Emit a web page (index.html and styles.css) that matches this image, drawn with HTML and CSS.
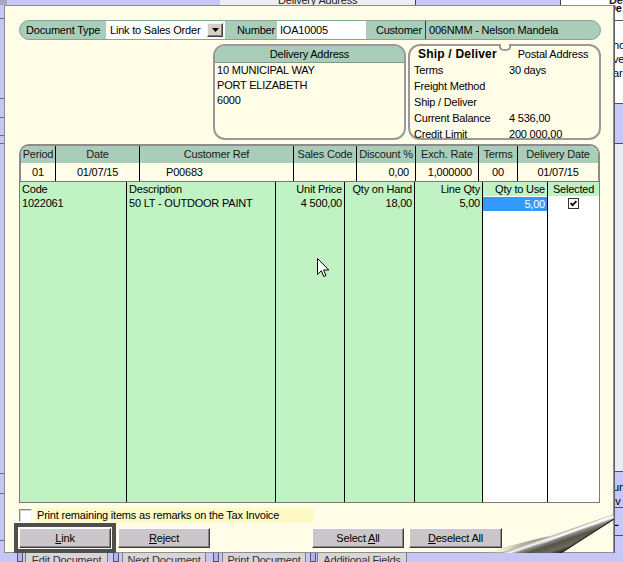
FILE: index.html
```html
<!DOCTYPE html>
<html>
<head>
<meta charset="utf-8">
<link rel="stylesheet" href="styles.css">
</head>
<body>
<div class="top">
  <div class="t-gray"></div>
  <div class="t-lav"></div>
  <div class="t-head"><span>Delivery Address</span></div>
  <div class="t-line"></div>
  <div class="t-lav2"></div>
  <div class="t-line"></div>
  <div class="t-white"><b>De</b></div>
</div>

<div class="left">
  <div class="l1"></div><div class="l2"></div><div class="l3"></div><div class="l4"></div>
  <div class="l5"></div><div class="l6"></div><div class="l7"></div><div class="l8"></div>
</div>

<div class="dialog">
  <div class="pill">
    <span class="lbl doctype">Document Type</span>
    <div class="select"><span>Link to Sales Order</span>
      <span class="ddbtn"><svg width="7" height="4" viewBox="0 0 7 4"><path d="M0 0H7L3.5 4Z" fill="#000"/></svg></span>
    </div>
    <span class="lbl num">Number</span>
    <div class="input">IOA10005</div>
    <span class="lbl cust">Customer</span>
    <span class="sep"></span>
    <span class="val">006NMM - Nelson Mandela</span>
  </div>

  <div class="row2">
    <div class="panel deliv">
      <div class="phead">Delivery Address</div>
      <div class="pbody">10 MUNICIPAL WAY<br>PORT ELIZABETH<br>6000</div>
    </div>
    <div class="panel ship">
      <div class="tabs">
        <div class="tab active">Ship / Deliver</div>
        <div class="tab other">Postal Address</div>
      </div>
      <div class="srows">
        <div class="srow"><span class="k">Terms</span><span>30 days</span></div>
        <div class="srow"><span class="k">Freight Method</span><span></span></div>
        <div class="srow"><span class="k">Ship / Deliver</span><span></span></div>
        <div class="srow"><span class="k">Current Balance</span><span>4 536,00</span></div>
        <div class="srow"><span class="k">Credit Limit</span><span>200 000,00</span></div>
      </div>
    </div>
  </div>

  <div class="hgrid">
    <div class="hc">Period</div>
    <div class="hc">Date</div>
    <div class="hc">Customer Ref</div>
    <div class="hc">Sales Code</div>
    <div class="hc">Discount %</div>
    <div class="hc">Exch. Rate</div>
    <div class="hc">Terms</div>
    <div class="hc last">Delivery Date</div>
    <div class="dc c">01</div>
    <div class="dc c">01/07/15</div>
    <div class="dc p">P00683</div>
    <div class="dc"></div>
    <div class="dc r">0,00</div>
    <div class="dc r">1,000000</div>
    <div class="dc c">00</div>
    <div class="dc c last">01/07/15</div>
  </div>

  <div class="grid">
    <div class="gc g1"><div class="gh">Code</div><div class="gd">1022061</div></div>
    <div class="gc g2"><div class="gh">Description</div><div class="gd">50 LT - OUTDOOR PAINT</div></div>
    <div class="gc g3"><div class="gh r">Unit Price</div><div class="gd r">4 500,00</div></div>
    <div class="gc g4"><div class="gh r">Qty on Hand</div><div class="gd r">18,00</div></div>
    <div class="gc g5"><div class="gh r">Line Qty</div><div class="gd r">5,00</div></div>
    <div class="gc g6 w"><div class="gh r">Qty to Use</div><div class="gd r sel">5,00</div></div>
    <div class="gc g7 w"><div class="gh c">Selected</div><div class="gd c"><svg class="chk" width="11" height="11" viewBox="0 0 11 11"><rect x="0.5" y="0.5" width="10" height="10" fill="#fff" stroke="#333"/><path d="M2.6 5.2 L4.6 7.2 L8.4 3.2" fill="none" stroke="#000" stroke-width="1.8"/></svg></div></div>
  </div>

  <div class="chkrow">
    <span class="cb"></span>
    <span class="cblabel">Print remaining items as remarks on the Tax Invoice</span>
  </div>

  <div class="btns">
    <div class="btn link"><span><u>L</u>ink</span></div>
    <div class="btn reject"><span><u>R</u>eject</span></div>
    <div class="btn selall"><span>Select <u>A</u>ll</span></div>
    <div class="btn desel"><span><u>D</u>eselect All</span></div>
  </div>

  <svg class="curl" width="130" height="75" viewBox="0 0 130 75">
    <defs>
      <linearGradient id="cone" gradientUnits="userSpaceOnUse" x1="80" y1="52" x2="86.5" y2="71">
        <stop offset="0" stop-color="#7d7c6a"/>
        <stop offset="0.1" stop-color="#c4c4bc"/>
        <stop offset="0.2" stop-color="#f8f8f8"/>
        <stop offset="0.3" stop-color="#8e8e88"/>
        <stop offset="0.5" stop-color="#55544a"/>
        <stop offset="0.8" stop-color="#6a6a5e"/>
        <stop offset="1" stop-color="#2c2c2a"/>
      </linearGradient>
      <linearGradient id="shade" x1="0" y1="0" x2="1" y2="0">
        <stop offset="0" stop-color="#fffde8" stop-opacity="0"/>
        <stop offset="0.5" stop-color="#a9a78e" stop-opacity="0.7"/>
        <stop offset="1" stop-color="#6f6e5c" stop-opacity="0.95"/>
      </linearGradient>
      <linearGradient id="streak" x1="0" y1="0" x2="1" y2="0">
        <stop offset="0" stop-color="#ffffff" stop-opacity="0"/>
        <stop offset="0.4" stop-color="#ffffff" stop-opacity="0.9"/>
        <stop offset="1" stop-color="#ffffff" stop-opacity="1"/>
      </linearGradient>
    </defs>
    <path d="M0 75 L24 75 Q48 66 66 58 Q30 66 0 75 Z" fill="url(#shade)"/>
    <path d="M16 75 Q70 57 129 36.5 L130 41 Q100 60 77 75 Z" fill="url(#cone)"/>
    <path d="M50 68.5 Q90 52 128.5 38" fill="none" stroke="url(#streak)" stroke-width="1.6"/>
    <path d="M77 75 Q100 60 130 41" fill="none" stroke="#262626" stroke-width="1.2"/>
  </svg>

  <svg class="cursor" width="13" height="20" viewBox="0 0 13 20"><path d="M0.5 0.5 V16.5 L4.3 12.8 L6.8 18.5 L9 17.6 L6.6 12 H11.8 Z" fill="#fff" stroke="#000" stroke-width="1" stroke-linejoin="miter"/></svg>
</div>

<div class="right">
  <div class="r1"><b>De</b></div>
  <div class="r2"><span>ho</span><span>ve</span><span>ar</span></div>
  <div class="r3"></div>
  <div class="r4"></div>
  <div class="r5"><span>un</span><span>iv</span></div>
  <div class="r6"><b>L</b></div>
  <div class="r7"></div>
</div>

<div class="bottom">
  <span class="mk"></span>
  <span class="tb tb1">Edit Document</span>
  <span class="mk mk2"></span>
  <span class="tb tb2">Next Document</span>
  <span class="mk mk3"></span>
  <span class="tb tb3">Print Document</span>
  <span class="mk mk4"></span>
  <span class="tb tb4">Additional Fields</span>
</div>
</body>
</html>
```

FILE: styles.css
```css
* { box-sizing: border-box; margin: 0; padding: 0; }
html { width: 623px; height: 562px; overflow: hidden; }
body {
  width: 623px; height: 562px; overflow: hidden;
  display: grid;
  grid-template-columns: 4px 610px 9px;
  grid-template-rows: 5px 548px 9px;
  background: #c6c6f4;
  font-family: "Liberation Sans", Arial, sans-serif;
  font-size: 11px;
  letter-spacing: -0.2px;
  line-height: 1;
  color: #000;
}

/* ---------- background window strips ---------- */
.top { grid-column: 1 / 4; grid-row: 1; display: flex; overflow: hidden; }
.t-gray { width: 7px; background: #a8a8bc; }
.t-lav { width: 213px; background: #c8c8f8; }
.t-head { width: 195px; background: #ededf2; display: flex; align-items: flex-end; padding-left: 58px; }
.t-head span, .t-white b { line-height: 12px; margin-bottom: -1px; color: #222; }
.t-line { width: 1px; background: #404040; }
.t-lav2 { width: 144px; background: #c8c8f8; }
.t-white { flex: 1; background: #fff; display: flex; align-items: flex-end; padding-left: 48px; }

.left { grid-column: 1; grid-row: 2; display: flex; flex-direction: column; background: #c6c6f4; }
.left div { flex: none; border-bottom: 1px solid #6c6c8c; }
.l1 { height: 14px; } .l2 { height: 80px; } .l3 { height: 19px; } .l4 { height: 18px; }
.l5 { height: 8px; } .l6 { height: 330px; } .l7 { height: 20px; } .l8 { height: 47px; }

.right { grid-column: 3; grid-row: 2; display: flex; flex-direction: column; overflow: hidden; border-left: 1px solid #606070; }
.right div { flex: none; border-bottom: 1px solid #505060; }
.r1 { height: 16px; background: #fff; font-weight: bold; }
.r1 b { display: block; margin-left: -7px; margin-top: -2px; }
.r2 { height: 83px; background: #fff; display: flex; flex-direction: column; padding-top: 17px; }
.r2 span, .r5 span { display: block; line-height: 14px; margin-left: -2px; }
.r3 { height: 40px; background: #c8c8f8; }
.r4 { height: 328px; background: #ececf4; }
.r5 { height: 36px; background: #c8c8f8; padding-top: 8px; }
.r6 { height: 28px; background: #c8c8f8; padding-top: 9px; }
.r6 b { margin-left: -3px; }
.r7 { flex: 1 !important; background: #c8c8f8; border-bottom: none !important; }

.bottom { grid-column: 1 / 4; grid-row: 3; display: flex; align-items: flex-start; background: #c6c6f4; overflow: hidden; padding-left: 17px; }
.mk { flex: none; width: 6px; height: 9px; background: #b4b4e4; border: 1px solid #505070; border-top: none; }
.tb { flex: none; height: 14px; background: #d8d5d8; border: 1px solid #7a7a7a; border-top: none; padding-top: 2px; color: #333; text-align: center; white-space: nowrap; }
.tb1 { margin-left: 2px; width: 83px; }
.mk2 { margin-left: 5px; }
.tb2 { margin-left: 3px; width: 84px; }
.mk3 { margin-left: 7px; }
.tb3 { margin-left: 3px; width: 84px; }
.mk4 { margin-left: 4px; }
.tb4 { margin-left: 1px; width: 90px; }

/* ---------- dialog ---------- */
.dialog {
  grid-column: 2; grid-row: 2;
  position: relative;
  background: #fffde8;
  border: 1px solid #8e8e8e;
  padding: 14px 0 0 14px;
  display: flex; flex-direction: column;
}

.pill {
  width: 582px; height: 20px; flex: none;
  display: flex;
  background: #a9cdb9;
  border: 1px solid #86a494;
  border-radius: 10px;
}
.lbl { display: flex; align-items: center; flex: none; white-space: nowrap; }
.doctype { width: 86px; padding-left: 6px; }
.select { width: 119px; flex: none; background: #fff; display: flex; align-items: center; padding-left: 4px; }
.ddbtn {
  margin-left: auto; margin-right: 2px;
  width: 16px; height: 14px;
  background: #d4d0c8;
  border: 1px solid; border-color: #f4f4f4 #404040 #404040 #f4f4f4;
  box-shadow: inset -1px -1px #808080;
  display: flex; align-items: center; justify-content: center;
}
.num { width: 52px; justify-content: flex-end; padding-right: 2px; }
.input { width: 89px; flex: none; background: #fff; display: flex; align-items: center; padding-left: 3px; }
.cust { width: 59px; justify-content: flex-end; padding-right: 3px; }
.sep { width: 1px; flex: none; background: #3a3a3a; }
.val { flex: 1; display: flex; align-items: center; padding-left: 3px; }

.row2 { width: 582px; height: 96px; flex: none; margin-top: 4px; display: flex; justify-content: flex-end; gap: 2px; }
.panel { width: 193px; height: 96px; border: 2px solid #999; border-radius: 12px; background: #fffde8; }
.deliv { overflow: hidden; }
.phead { height: 17px; line-height: 16px; text-align: center; background: #a9cdb9; border-bottom: 1px solid #7e9c8c; }
.pbody { padding-left: 2px; line-height: 15px; }

.ship { position: relative; padding-left: 2px; }
.tabs { display: flex; height: 16px; }
.tab { line-height: 16px; white-space: nowrap; }
.tab.active { width: 91px; padding-left: 6px; font-weight: bold; font-size: 12px; letter-spacing: 0.2px; }
.tab.other { flex: 1; position: relative; text-align: center; padding-left: 4px; }
.tab.other::before {
  content: ""; position: absolute; left: -4px; top: -2px;
  width: 8px; height: 5px;
  background: #fffde8;
  border: 2px solid #999; border-top: none;
  border-radius: 0 0 50% 50%;
}
.srows { padding-left: 2px; }
.srow { display: flex; height: 16px; line-height: 16px; }
.k { width: 95px; flex: none; }

.hgrid {
  width: 581px; flex: none; margin-top: 4px;
  display: grid;
  grid-template-columns: 35px 84px 154px 63px 59px 63px 39px 80px;
  grid-template-rows: 17px 18px;
  border: 2px solid #8c8c8c; border-bottom: none;
  border-radius: 10px 10px 0 0;
  overflow: hidden;
}
.hc, .dc { border-right: 1px solid #000; display: flex; align-items: center; white-space: nowrap; }
.hc { background: #a9cdb9; justify-content: center; color: #1a1a1a; }
.dc { background: #fffde8; }
.hc.last, .dc.last { border-right: none; }
.dc.c { justify-content: center; }
.dc.r { justify-content: flex-end; padding-right: 6px; }
.dc.p { padding-left: 26px; }

.grid { width: 581px; height: 322px; flex: none; display: flex; border: 1px solid #7a7a7a; }
.gc { flex: none; height: 100%; background: #c0f2c4; border-right: 1px solid #000; }
.gc.w { background: #fff; }
.g1 { width: 107px; } .g2 { width: 149px; } .g3 { width: 69px; } .g4 { width: 70px; }
.g5 { width: 68px; } .g6 { width: 65px; } .g7 { width: 51px; border-right: none; }
.gh { height: 14px; line-height: 14px; padding: 0 2px; background: #c0f2c4; white-space: nowrap; }
.gd { height: 15px; line-height: 15px; padding: 0 2px; white-space: nowrap; }
.gh.r, .gd.r { text-align: right; }
.gh.c, .gd.c { text-align: center; }
.gd.sel { background: #3399ff; color: #fff; margin-top: 1px; height: 14px; line-height: 14px; }
.gd.c { display: flex; align-items: center; justify-content: center; }

.chkrow { flex: none; height: 15px; margin-top: 5px; display: flex; align-items: center; }
.cb {
  width: 13px; height: 13px; flex: none; background: #fff;
  border: 1px solid; border-color: #8a8a8a #f4f4f4 #f4f4f4 #8a8a8a;
  box-shadow: inset 1px 1px #cfcfcf;
}
.cblabel { margin-left: 3px; width: 279px; height: 15px; line-height: 15px; padding-left: 2px; background: #fdfac6; white-space: nowrap; }

.btns { flex: none; height: 20px; margin-top: 5px; display: flex; }
.btn {
  width: 92px; height: 20px; flex: none;
  background: #cac6ca;
  border: 1px solid; border-color: #fff #3c3c3c #3c3c3c #fff;
  box-shadow: inset -1px -1px #878787;
  display: flex; align-items: center; justify-content: center;
}
.btn u { text-decoration: underline; }
.link { outline: 4px solid #4e4e4e; outline-offset: 1px; }
.reject { margin-left: 7px; }
.selall { margin-left: 102px; }
.desel { margin-left: 5px; width: 93px; }

.curl { position: absolute; right: -1px; bottom: -1px; }
.cursor { position: absolute; left: 312px; top: 252px; }
```
